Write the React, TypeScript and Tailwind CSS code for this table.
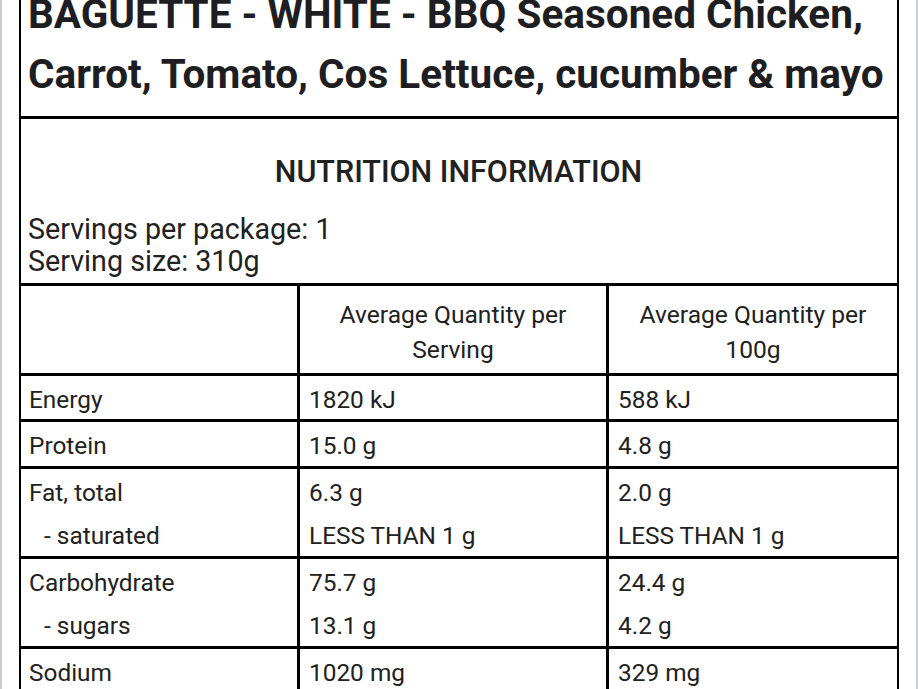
import React from "react";

type Line = { text: string; indent?: boolean };
type Row = { label: Line[]; serving: Line[]; per100: Line[] };

const L = (text: string, indent = false): Line => ({ text, indent });

const rows: Row[] = [
  { label: [L("Energy")], serving: [L("1820 kJ")], per100: [L("588 kJ")] },
  { label: [L("Protein")], serving: [L("15.0 g")], per100: [L("4.8 g")] },
  { label: [L("Fat, total"), L("- saturated", true)], serving: [L("6.3 g"), L("LESS THAN 1 g")], per100: [L("2.0 g"), L("LESS THAN 1 g")] },
  { label: [L("Carbohydrate"), L("- sugars", true)], serving: [L("75.7 g"), L("13.1 g")], per100: [L("24.4 g"), L("4.2 g")] },
  { label: [L("Sodium")], serving: [L("1020 mg")], per100: [L("329 mg")] },
];

function Cell({ lines, className }: { lines: Line[]; className: string }) {
  return (
    <div className={className}>
      {lines.map((l, i) => (
        <div
          key={i}
          className={l.indent ? "h-[43.5px] pt-[5px] pl-[15px] leading-[38.5px] whitespace-pre" : "h-[43.5px] pt-[5px] leading-[38.5px] whitespace-pre"}
        >
          {l.text}
        </div>
      ))}
    </div>
  );
}

export default function App() {
  return (
    <div className="flex h-[689px] w-[918px] overflow-hidden bg-white font-['Roboto',sans-serif] text-[#212121]">
      <div className="w-[2px] shrink-0 bg-[#c9c9d2]" />
      <div className="w-[17px] shrink-0" />
      <div className="flex w-[880px] shrink-0 flex-col">
        <div className="border-x-2 border-b-[3px] border-black pl-[7px] pr-2 pb-[12px]">
          <div className="-mt-[16.5px] text-[40.5px] font-bold leading-[60px] text-[#1e1e22]">
            BAGUETTE - WHITE - BBQ Seasoned Chicken, Carrot, Tomato, Cos Lettuce, cucumber &amp; mayo
          </div>
        </div>
        <div className="border-x-2 border-b-[3px] border-black pl-[7px] pr-2">
          <div className="pt-[35px] text-center text-[30.5px] font-medium leading-[36px]">NUTRITION INFORMATION</div>
          <div className="mt-[23px] pb-[6px] text-[28.7px] leading-[32px]">
            <div>Servings per package: 1</div>
            <div>Serving size: 310g</div>
          </div>
        </div>
        <div className="flex border-x-2 border-b-[3px] border-black text-[24.6px]">
          <div className="w-[279px] shrink-0 border-r-[3px] border-black" />
          <div className="w-[309px] shrink-0 border-r-[3px] border-black px-2 pt-[11px] pb-[6px] text-center leading-[35px]">
            Average Quantity per Serving
          </div>
          <div className="flex-1 px-2 pt-[11px] pb-[6px] text-center leading-[35px]">Average Quantity per 100g</div>
        </div>
        {rows.map((r, i) => (
          <div key={i} className="flex border-x-2 border-b-[3px] border-black text-[24.4px]">
            <Cell lines={r.label} className="w-[279px] shrink-0 border-r-[3px] border-black pl-2" />
            <Cell lines={r.serving} className="w-[309px] shrink-0 border-r-[3px] border-black pl-[9px]" />
            <Cell lines={r.per100} className="flex-1 pl-[9px]" />
          </div>
        ))}
      </div>
      <div className="w-[17px] shrink-0" />
      <div className="w-[2px] shrink-0 bg-[#c9c9d2]" />
    </div>
  );
}
